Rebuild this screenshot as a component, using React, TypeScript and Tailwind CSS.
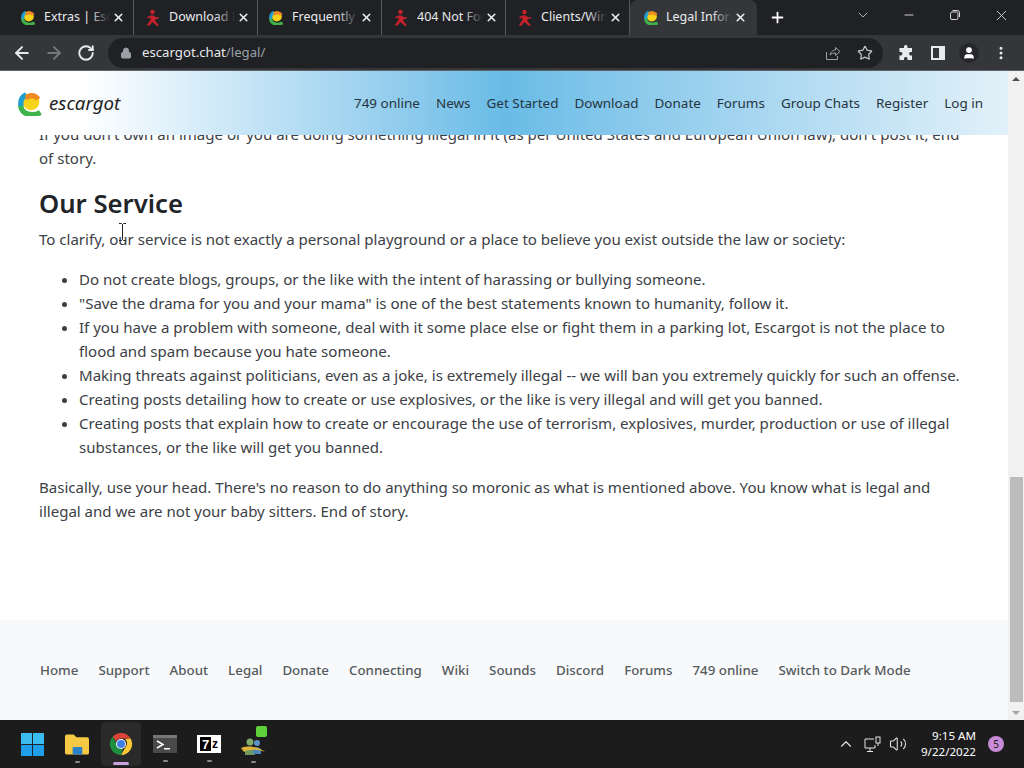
import {
  ArrowLeft,
  ArrowRight,
  ChevronDown,
  ChevronUp,
  Lock,
  Minus,
  MoreVertical,
  Plus,
  RotateCw,
  Star,
  User,
  Volume2,
  X,
} from "lucide-react";

const tabs = [
  { title: "Extras | Escargot", icon: "snail" },
  { title: "Download Escargot", icon: "man" },
  { title: "Frequently Asked", icon: "snail" },
  { title: "404 Not Found", icon: "man" },
  { title: "Clients/Windows", icon: "man" },
];

const navLinks = ["749 online", "News", "Get Started", "Download", "Donate", "Forums", "Group Chats", "Register", "Log in"];
const footerLinks = ["Home", "Support", "About", "Legal", "Donate", "Connecting", "Wiki", "Sounds", "Discord", "Forums", "749 online", "Switch to Dark Mode"];

function SnailLogo({ size }: { size: number }) {
  return (
    <svg width={size} height={size} viewBox="0 0 24 24" className="shrink-0">
      <circle cx="12.5" cy="10.5" r="8" fill="#f6d31a" />
      <path d="M21.5 20.5C17 23.5 10 23.5 6 20.5C3.5 18.5 2.5 15.5 2.7 13" fill="none" stroke="#3fb24a" strokeWidth="5" />
      <path d="M3 14.5C2 9.5 4 5.5 8 3.5" fill="none" stroke="#1e9fd0" strokeWidth="5" />
      <path d="M6.5 4.5C11 0.5 18 1.5 21.5 6.5L17.5 9C15 6.5 11 6.5 8.5 9Z" fill="#ee8a22" />
    </svg>
  );
}

function RedMan() {
  return (
    <svg width="16" height="18" viewBox="0 0 16 18" className="shrink-0">
      <circle cx="7.5" cy="3" r="2.2" fill="#c9212b" />
      <path d="M2 8L7 6L12 8.5L14 8V9.5L11 10L10 11.5L14 16.5L12 17L7.5 13L4 17L2 16L5.5 11L5.5 8.5L3 9.5Z" fill="#c9212b" />
    </svg>
  );
}

function ChromeIcon() {
  return (
    <svg width="24" height="24" viewBox="0 0 24 24">
      <path d="M12 1A11 11 0 0 1 21.6 6.5H12A5.5 5.5 0 0 0 7 9.5L3.8 4.6A11 11 0 0 1 12 1Z" fill="#dc4437" />
      <path d="M21.6 6.5A11 11 0 0 1 12 23L16.8 14.8A5.5 5.5 0 0 0 16 7Z" fill="#fcc934" />
      <path d="M3.8 4.6L7.6 12A5.5 5.5 0 0 0 14 17L12 23A11 11 0 0 1 3.8 4.6Z" fill="#1e8e3e" />
      <circle cx="12" cy="12" r="5" fill="#fff" />
      <circle cx="12" cy="12" r="4" fill="#3d7de4" />
    </svg>
  );
}

function Tab({ title, icon }: { title: string; icon: string }) {
  return (
    <div className="flex h-[35px] w-[124px] shrink-0 items-center border-r border-[#55575b] pl-[11px]">
      {icon === "snail" ? <SnailLogo size={15} /> : <RedMan />}
      <div className="relative ml-[8px] w-[66px] overflow-hidden whitespace-nowrap text-[12.5px] text-[#e8eaed]">
        {title}
        <div className="absolute inset-y-0 right-0 w-[20px] bg-gradient-to-r from-transparent to-[#202124]" />
      </div>
      <X size={13} strokeWidth={3} className="ml-[2px] shrink-0 text-[#e8eaed]" />
    </div>
  );
}

function Browser() {
  return (
    <div className="font-['Noto_Sans',sans-serif]">
      <div className="flex h-[35px] items-center bg-[#202124] pl-[10px]">
        {tabs.map((t) => (
          <Tab key={t.title} title={t.title} icon={t.icon} />
        ))}
        <div className="flex h-[35px] w-[127px] shrink-0 items-center rounded-t-[8px] bg-[#35363a] pl-[14px]">
          <SnailLogo size={15} />
          <div className="relative ml-[7px] w-[66px] overflow-hidden whitespace-nowrap text-[12.5px] text-[#e8eaed]">
            Legal Information
            <div className="absolute inset-y-0 right-0 w-[20px] bg-gradient-to-r from-transparent to-[#35363a]" />
          </div>
          <X size={13} strokeWidth={3} className="ml-[2px] shrink-0 text-[#e8eaed]" />
        </div>
        <Plus size={17} strokeWidth={2.5} className="ml-[12px] text-white" />
        <ChevronDown size={16} strokeWidth={1.2} className="ml-[69px] -mt-[5px] text-[#d6d6d6]" />
        <Minus size={14} strokeWidth={1.5} className="ml-[31px] -mt-[5px] text-[#e6e6e6]" />
        <svg width="12" height="12" viewBox="0 0 12 12" className="ml-[33px] -mt-[5px] text-[#d6d6d6]" fill="none" stroke="currentColor">
          <rect x="1.5" y="3" width="7.5" height="7.5" rx="1.5" />
          <path d="M3.5 1.5H8.5A2 2 0 0 1 10.5 3.5V8" />
        </svg>
        <X size={17} strokeWidth={1.2} className="ml-[32px] -mt-[5px] text-[#e6e6e6]" />
      </div>
      <div className="flex h-[35px] items-center bg-[#35363a] pl-[12px]">
        <ArrowLeft size={20} strokeWidth={2.4} className="text-[#e8eaed]" />
        <ArrowRight size={20} strokeWidth={2.4} className="ml-[12px] text-[#75777b]" />
        <RotateCw size={18} strokeWidth={2.5} className="ml-[13px] text-[#e8eaed]" />
        <div className="ml-[13px] flex h-[30px] w-[775px] items-center rounded-full bg-[#202124] pl-[12px] pr-[10px]">
          <Lock size={12} fill="#9aa0a6" className="text-[#9aa0a6]" />
          <span className="ml-[10px] text-[13.2px] text-[#e8eaed]">
            escargot.chat<span className="text-[#9aa0a6]">/legal/</span>
          </span>
          <svg width="16" height="16" viewBox="0 0 16 16" className="ml-auto text-[#9aa0a6]" fill="none" stroke="currentColor">
            <path d="M1.5 7V14.5H12.5V11M5 10C6 6 9 5 10.5 5V2.5L15 6.5L10.5 10.5V8C8.5 8 6.5 8.5 5 10Z" />
          </svg>
          <Star size={16} strokeWidth={1.8} className="ml-[16px] text-[#c4c7cb]" />
        </div>
        <svg width="16" height="16" viewBox="0 0 16 16" className="ml-[15px] text-[#e8eaed]" fill="currentColor">
          <path d="M6 1.5A1.8 1.8 0 0 1 9.5 1.5V3H14V7H12.5A1.8 1.8 0 0 0 12.5 10.5H14V15H9.5V13.5A1.8 1.8 0 0 0 6 13.5V15H1.5V10.5H3A1.8 1.8 0 0 0 3 7H1.5V3H6Z" />
        </svg>
        <svg width="14" height="14" viewBox="0 0 14 14" className="ml-[17px]">
          <rect width="14" height="14" fill="#e8eaed" />
          <rect x="2" y="2" width="6" height="10" fill="#35363a" />
        </svg>
        <div className="ml-[14px] flex h-[20px] w-[20px] items-center justify-center rounded-full bg-[#26272a]">
          <User size={14} fill="#fff" className="text-white" />
        </div>
        <MoreVertical size={16} strokeWidth={2.5} className="ml-[14px] text-[#e8eaed]" />
      </div>
    </div>
  );
}

function Page() {
  return (
    <div className="flex h-[650px] border-t border-[#5f6368] bg-white">
      <div className="flex min-w-0 flex-1 flex-col overflow-hidden font-['Noto_Sans',sans-serif] text-[15.06px]">
        <header className="relative z-10 flex h-[64px] shrink-0 items-center bg-gradient-to-r from-white from-[8%] via-[#68bbe6] via-[50%] to-[#e2f1f9] pl-[18px] pr-[25px]">
          <SnailLogo size={25} />
          <span className="ml-[6px] text-[18.7px] italic text-[#222]">escargot</span>
          <nav className="ml-auto flex gap-[16px] text-[13.47px] text-[#26343f]">
            {navLinks.map((l) => (
              <span key={l}>{l}</span>
            ))}
          </nav>
        </header>
        <main className="-mt-[13px] flex-1 px-[39px] leading-[24px] text-[#3c4146]">
          <p>
            If you don't own an image or you are doing something illegal in it (as per United States and European Union law), don't post it, end
            <br />
            of story.
          </p>
          <h2 className="mt-[16px] text-[25.7px] font-semibold leading-[36px] text-[#212529]">Our Service</h2>
          <p className="mt-[5px]">To clarify, our service is not exactly a personal playground or a place to believe you exist outside the law or society:</p>
          <ul className="mt-[16px] list-disc pl-[40px]">
            <li>Do not create blogs, groups, or the like with the intent of harassing or bullying someone.</li>
            <li>"Save the drama for you and your mama" is one of the best statements known to humanity, follow it.</li>
            <li>
              If you have a problem with someone, deal with it some place else or fight them in a parking lot, Escargot is not the place to
              <br />
              flood and spam because you hate someone.
            </li>
            <li>Making threats against politicians, even as a joke, is extremely illegal -- we will ban you extremely quickly for such an offense.</li>
            <li>Creating posts detailing how to create or use explosives, or the like is very illegal and will get you banned.</li>
            <li>
              Creating posts that explain how to create or encourage the use of terrorism, explosives, murder, production or use of illegal
              <br />
              substances, or the like will get you banned.
            </li>
          </ul>
          <p className="mt-[16px]">
            Basically, use your head. There's no reason to do anything so moronic as what is mentioned above. You know what is legal and
            <br />
            illegal and we are not your baby sitters. End of story.
          </p>
        </main>
        <footer className="flex h-[100px] shrink-0 items-center gap-[20px] bg-[#f8f9fa] pl-[40px] text-[13.34px] font-medium text-[#555b60]">
          {footerLinks.map((l) => (
            <span key={l}>{l}</span>
          ))}
        </footer>
      </div>
      <div className="flex w-[16px] shrink-0 flex-col items-center bg-[#f1f1f1] pb-[5px] pt-[6px]">
        <div className="h-0 w-0 border-x-[4px] border-b-[4px] border-x-transparent border-b-[#505050]" />
        <div className="mt-[396px] h-[225px] w-[13px] bg-[#bcbcbc]" />
        <div className="mt-auto h-0 w-0 border-x-[4px] border-t-[4px] border-x-transparent border-t-[#a3a3a3]" />
      </div>
    </div>
  );
}

function Taskbar() {
  return (
    <div className="flex h-[48px] items-center bg-[#1c1c1c] pl-[21px] pr-[20px] font-['Noto_Sans',sans-serif] text-white">
      <svg width="23" height="23" viewBox="0 0 25 25" className="shrink-0">
        <rect width="12" height="12" fill="#3bbcf0" />
        <rect x="13" width="12" height="12" fill="#3bbcf0" />
        <rect y="13" width="12" height="12" fill="#1f9eea" />
        <rect x="13" y="13" width="12" height="12" fill="#1f9eea" />
      </svg>
      <div className="relative ml-[21px] flex w-[24px] justify-center">
        <svg width="24" height="22" viewBox="0 0 25 22">
          <path d="M0 3A2 2 0 0 1 2 1H9L12 4H23A2 2 0 0 1 25 6V20A2 2 0 0 1 23 22H2A2 2 0 0 1 0 20Z" fill="#f6c945" />
          <rect x="8" y="14" width="10" height="8" rx="1" fill="#2a83c9" />
        </svg>
        <div className="absolute -bottom-[8px] h-[2px] w-[5px] rounded bg-[#8a8a8a]" />
      </div>
      <div className="relative ml-[12px] flex h-[44px] w-[40px] items-center justify-center rounded bg-[#2a2a2a]">
        <ChromeIcon />
        <div className="absolute bottom-[1px] h-[3px] w-[16px] rounded bg-[#c9a0e0]" />
      </div>
      <div className="relative ml-[12px] flex w-[24px] justify-center">
        <svg width="24" height="18" viewBox="0 0 24 18">
          <rect width="24" height="18" rx="1" fill="#4a4a4a" />
          <rect width="24" height="3" fill="#777" />
          <path d="M4 6L10 9.5L4 13" fill="none" stroke="#fff" strokeWidth="1.5" />
          <rect x="11" y="13" width="6" height="1.5" fill="#fff" />
        </svg>
        <div className="absolute -bottom-[9px] h-[2px] w-[5px] rounded bg-[#8a8a8a]" />
      </div>
      <div className="relative ml-[20px] flex h-[18px] w-[24px] items-center justify-center bg-white">
        <span className="flex h-[14px] w-[11px] items-center justify-center bg-black font-['Liberation_Sans',sans-serif] text-[13px] font-bold leading-none text-white">7</span>
        <span className="ml-[1px] font-['Liberation_Sans',sans-serif] text-[12px] font-bold leading-none text-black">z</span>
        <div className="absolute -bottom-[9px] h-[2px] w-[5px] rounded bg-[#8a8a8a]" />
      </div>
      <div className="relative ml-[20px] flex h-[24px] w-[24px] items-end">
        <svg width="24" height="20" viewBox="0 0 24 20">
          <circle cx="9" cy="6" r="3.5" fill="#7cab6d" />
          <circle cx="16" cy="7" r="3" fill="#5b94c5" />
          <path d="M4 15C4 9 14 9 14 15V19H4Z" fill="#6e9a62" />
          <path d="M12 15C12 10 20 10 20 15V18H12Z" fill="#4f86b8" />
          <path d="M0 12C8 9 18 11 24 16C16 13 8 13 3 16Z" fill="#dcb33f" />
        </svg>
        <div className="absolute -right-[2px] -top-[6px] h-[11px] w-[11px] rounded-[2px] bg-[#5fd13a]" />
        <div className="absolute -bottom-[7px] left-[10px] h-[2px] w-[5px] rounded bg-[#8a8a8a]" />
      </div>
      <ChevronUp size={18} strokeWidth={1.5} className="ml-auto text-[#e6e6e6]" />
      <svg width="17" height="17" viewBox="0 0 17 17" className="ml-[9px] text-[#e6e6e6]" fill="none" stroke="currentColor">
        <path d="M10 3H1V12H11V9M6 12V15M3 15.5H9" />
        <rect x="12" y="1" width="4" height="6" />
        <path d="M14 7V10" />
      </svg>
      <Volume2 size={18} strokeWidth={1.4} className="ml-[8px] text-[#e6e6e6]" />
      <div className="ml-[14px] flex flex-col items-end text-[11.6px] leading-[16px]">
        <span>9:15 AM</span>
        <span>9/22/2022</span>
      </div>
      <div className="ml-[12px] flex h-[16px] w-[16px] items-center justify-center rounded-full bg-[#c98ad6] text-[10px] text-[#1c1c1c]">5</div>
    </div>
  );
}

export default function App() {
  return (
    <div className="relative h-[768px] w-[1024px] overflow-hidden">
      <Browser />
      <Page />
      <Taskbar />
      {/* text cursor */}
      <svg width="7" height="18" viewBox="0 0 7 18" className="absolute left-[119px] top-[223px]" fill="none" stroke="#222">
        <path d="M0 .5H2.5L3.5 1.5L4.5 .5H7M3.5 1.5V16.5M0 17.5H2.5L3.5 16.5L4.5 17.5H7" />
      </svg>
    </div>
  );
}
